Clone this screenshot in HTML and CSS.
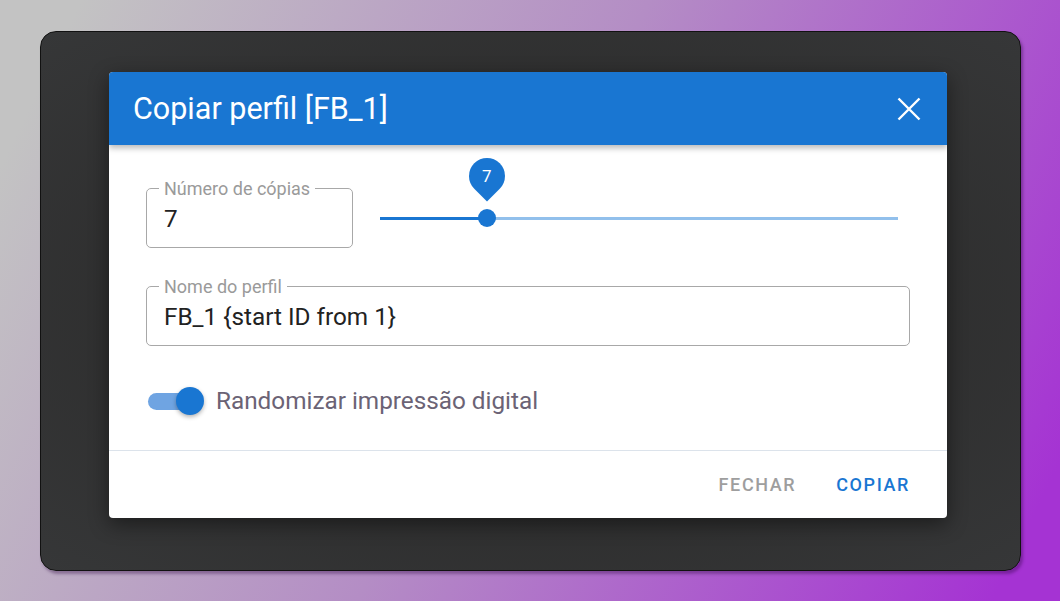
FILE: index.html
```html
<!DOCTYPE html>
<html lang="pt">
<head>
    <meta charset="UTF-8">
    <meta name="viewport" content="width=device-width, initial-scale=1.0">
    <title>Copiar perfil</title>
    <link rel="stylesheet" href="styles.css">
</head>
<body>

    <!-- Moldura escura -->
    <div class="frame">

        <!-- Diálogo -->
        <div class="dialog">
            <div class="dialog-header">
                <div class="dialog-title">Copiar perfil [FB_1]</div>
                <svg class="close-icon" width="24" height="24" viewBox="0 0 24 24">
                    <path d="M1.5 1.5 L22.5 22.5 M22.5 1.5 L1.5 22.5" stroke="#fff" stroke-width="2.4" fill="none"/>
                </svg>
            </div>

            <div class="dialog-content">
                <div class="row">
                    <div class="field field-small">
                        <span class="field-label">Número de cópias</span>
                        <span class="field-value">7</span>
                    </div>

                    <!-- Slider 1..30 -->
                    <div class="slider">
                        <div class="slider-rail"></div>
                        <div class="slider-track" style="width: 20.69%"></div>
                        <div class="slider-thumb" style="left: 20.69%">
                            <div class="slider-label"><span>7</span></div>
                        </div>
                    </div>
                </div>

                <div class="field field-wide">
                    <span class="field-label">Nome do perfil</span>
                    <span class="field-value">FB_1 {start ID from 1}</span>
                </div>

                <div class="switch-row">
                    <div class="switch">
                        <div class="switch-track"></div>
                        <div class="switch-thumb"></div>
                    </div>
                    <span class="switch-text">Randomizar impressão digital</span>
                </div>
            </div>

            <div class="dialog-actions">
                <button class="btn btn-close">Fechar</button>
                <button class="btn btn-copy">Copiar</button>
            </div>
        </div>
    </div>

</body>
</html>
```

FILE: styles.css
```css
/* Estilos generales */
body {
    margin: 0;
    padding: 0;
    height: 601px;
    overflow: hidden;
    font-family: Roboto, "Liberation Sans", sans-serif;
    background: linear-gradient(116deg, #c3c3c3 6%, #b48dc5 48%, #a533d3 95%);
}

/* Moldura */
.frame {
    box-sizing: border-box;
    width: 981px;
    height: 540px;
    margin: 31px 0 0 40px;
    padding: 40px 73px 51px 68px;
    background: radial-gradient(ellipse at center, #2d2d2d 45%, #363738 100%);
    border: 1px solid #111;
    border-radius: 16px;
    box-shadow: 2px 3px 3px rgba(40, 0, 60, 0.35);
}

/* Diálogo */
.dialog {
    background: #fff;
    border-radius: 4px;
    overflow: hidden;
    height: 446px;
    display: flex;
    flex-direction: column;
    box-shadow: 0 6px 20px rgba(0, 0, 0, 0.45);
}

.dialog-header {
    position: relative;
    z-index: 1;
    height: 73px;
    flex-shrink: 0;
    background: #1976d2;
    display: flex;
    align-items: center;
    justify-content: space-between;
    padding: 0 26px 0 24px;
    box-shadow: 0 3px 6px rgba(0, 0, 0, 0.28);
}

.dialog-title {
    color: #fff;
    font-size: 30.5px;
    margin-top: -1px;
}

.close-icon {
    display: block;
}

.dialog-content {
    flex: 1;
    padding: 43px 37px 0 37px;
}

.row {
    display: flex;
    align-items: center;
    gap: 27px;
}

/* Campos */
.field {
    position: relative;
    box-sizing: border-box;
    height: 60px;
    border: 1px solid #a8a8a8;
    border-radius: 5px;
    display: flex;
    align-items: center;
    padding: 0 17px;
}

.field-small {
    width: 207px;
    flex-shrink: 0;
}

.field-wide {
    margin-top: 38px;
    width: 764px;
}

.field-label {
    position: absolute;
    top: -10px;
    left: 12px;
    padding: 0 5px;
    background: #fff;
    color: #9a9a9a;
    font-size: 18px;
    line-height: 20px;
}

.field-value {
    color: #222;
    font-size: 24.3px;
    margin-top: 1px;
}

/* Slider */
.slider {
    position: relative;
    flex: 1;
    height: 30px;
    margin-right: 12px;
}

.slider-rail {
    position: absolute;
    left: 0;
    right: 0;
    top: 14px;
    height: 3px;
    background: #92c0ec;
}

.slider-track {
    position: absolute;
    left: 0;
    top: 14px;
    height: 3px;
    background: #1976d2;
}

.slider-thumb {
    position: absolute;
    top: 6px;
    width: 18px;
    height: 18px;
    margin-left: -9px;
    border-radius: 50%;
    background: #1976d2;
}

.slider-label {
    position: absolute;
    left: -9px;
    top: -51px;
    width: 36px;
    height: 36px;
    border-radius: 50% 50% 50% 0;
    background: #1976d2;
    transform: rotate(-45deg);
    display: flex;
    align-items: center;
    justify-content: center;
}

.slider-label span {
    transform: rotate(45deg);
    color: #fff;
    font-size: 17px;
}

/* Interruptor */
.switch-row {
    display: flex;
    align-items: center;
    margin-top: 40px;
    padding-left: 2px;
}

.switch {
    position: relative;
    width: 56px;
    height: 28px;
}

.switch-track {
    position: absolute;
    left: 0;
    top: 6px;
    width: 46px;
    height: 17px;
    border-radius: 9px;
    background: #6fa4e2;
}

.switch-thumb {
    position: absolute;
    left: 28px;
    top: 0;
    width: 28px;
    height: 28px;
    border-radius: 50%;
    background: #1976d2;
    box-shadow: 0 2px 4px rgba(0, 0, 0, 0.3);
}

.switch-text {
    margin-left: 12px;
    font-size: 24.3px;
    color: #6b6375;
}

/* Acciones */
.dialog-actions {
    height: 67px;
    border-top: 1px solid #dce3eb;
    display: flex;
    align-items: center;
    justify-content: flex-end;
    gap: 22px;
    padding-right: 28px;
}

.btn {
    background: none;
    border: none;
    font-family: inherit;
    font-size: 18px;
    font-weight: 500;
    letter-spacing: 1.6px;
    text-transform: uppercase;
    padding: 8px 9px;
    cursor: pointer;
}

.btn-close {
    color: #9e9e9e;
}

.btn-copy {
    color: #1976d2;
}
```
